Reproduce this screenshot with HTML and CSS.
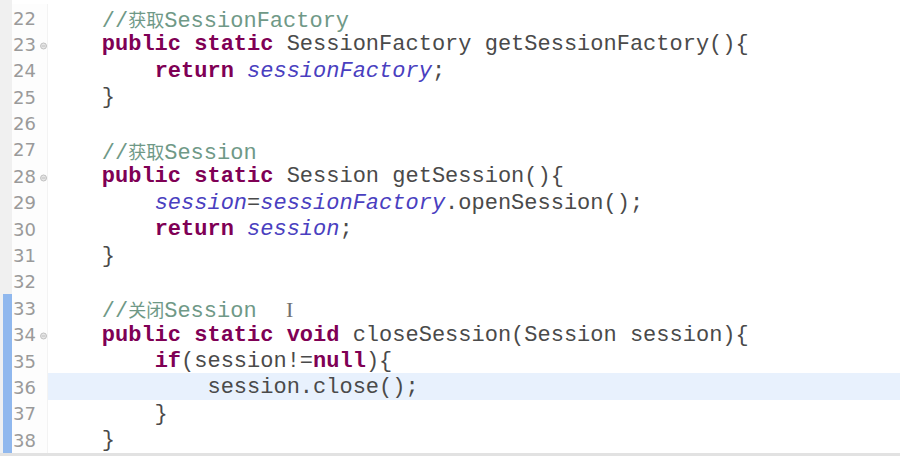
FILE: index.html
```html
<!DOCTYPE html>
<html>
<head>
<meta charset="utf-8">
<link rel="stylesheet" href="styles.css">
</head>
<body>
<div class="editor">
  <div class="row"><div class="ruler"></div><div class="num">22</div><div class="code">    <span class="cm">//<span class="cjk">获取</span>SessionFactory</span></div></div>
  <div class="row"><div class="ruler"></div><div class="num">23<svg class="fold" viewBox="0 0 8 8"><circle cx="4" cy="4" r="3.4"/><line x1="2" y1="4" x2="6" y2="4"/></svg></div><div class="code">    <span class="kw">public</span> <span class="kw">static</span> SessionFactory getSessionFactory(){</div></div>
  <div class="row"><div class="ruler"></div><div class="num">24</div><div class="code">        <span class="kw">return</span> <span class="fd">sessionFactory</span>;</div></div>
  <div class="row"><div class="ruler"></div><div class="num">25</div><div class="code">    }</div></div>
  <div class="row"><div class="ruler"></div><div class="num">26</div><div class="code"> </div></div>
  <div class="row"><div class="ruler"></div><div class="num">27</div><div class="code">    <span class="cm">//<span class="cjk">获取</span>Session</span></div></div>
  <div class="row"><div class="ruler"></div><div class="num">28<svg class="fold" viewBox="0 0 8 8"><circle cx="4" cy="4" r="3.4"/><line x1="2" y1="4" x2="6" y2="4"/></svg></div><div class="code">    <span class="kw">public</span> <span class="kw">static</span> Session getSession(){</div></div>
  <div class="row"><div class="ruler"></div><div class="num">29</div><div class="code">        <span class="fd">session</span>=<span class="fd">sessionFactory</span>.openSession();</div></div>
  <div class="row"><div class="ruler"></div><div class="num">30</div><div class="code">        <span class="kw">return</span> <span class="fd">session</span>;</div></div>
  <div class="row"><div class="ruler"></div><div class="num">31</div><div class="code">    }</div></div>
  <div class="row"><div class="ruler"></div><div class="num">32</div><div class="code"> </div></div>
  <div class="row"><div class="ruler mark"></div><div class="num">33</div><div class="code">    <span class="cm">//<span class="cjk">关闭</span>Session</span>  <span class="ibeam">I</span></div></div>
  <div class="row"><div class="ruler mark"></div><div class="num">34<svg class="fold" viewBox="0 0 8 8"><circle cx="4" cy="4" r="3.4"/><line x1="2" y1="4" x2="6" y2="4"/></svg></div><div class="code">    <span class="kw">public</span> <span class="kw">static</span> <span class="kw">void</span> closeSession(Session session){</div></div>
  <div class="row"><div class="ruler mark"></div><div class="num">35</div><div class="code">        <span class="kw">if</span>(session!=<span class="kw">null</span>){</div></div>
  <div class="row"><div class="ruler mark"></div><div class="num">36</div><div class="code current">            session.close();</div></div>
  <div class="row"><div class="ruler mark"></div><div class="num">37</div><div class="code">        }</div></div>
  <div class="row"><div class="ruler mark"></div><div class="num">38</div><div class="code">    }</div></div>
</div>
<div class="statusline"></div>
</body>
</html>
```
FILE: styles.css
```css
html, body {
  margin: 0;
  padding: 0;
  background: #ffffff;
  width: 900px;
  height: 456px;
  overflow: hidden;
}
body {
  display: flex;
  flex-direction: column;
}
.editor {
  display: flex;
  flex-direction: column;
  padding-top: 4px;
  flex: 1;
  background: linear-gradient(to right, #f0f0f0 0, #f0f0f0 12px, transparent 12px);
}
.row {
  display: flex;
  height: 26.4px;
  line-height: 26.4px;
}
.ruler {
  width: 12px;
  flex: none;
  background: #f0f0f0;
}
.ruler.mark {
  background: linear-gradient(to right, #eef0f2 0, #eef0f2 3px, #90b8ee 3px, #90b8ee 12px);
}
.num {
  width: 36px;
  flex: none;
  box-sizing: border-box;
  padding-left: 1px;
  padding-top: 3px;
  border-right: 1px solid #f3f3f3;
  font-family: "DejaVu Sans", sans-serif;
  font-size: 18px;
  color: #9a9a9a;
  display: flex;
  align-items: center;
  background: #fdfdfd;
}
.fold {
  width: 8px;
  height: 8px;
  margin-left: 4px;
  margin-top: 2px;
  fill: #e6e6e6;
  stroke: #b5b5b5;
  stroke-width: 0.9;
}
.code {
  flex: 1;
  box-sizing: border-box;
  height: 26.4px;
  padding-top: 2px;
  white-space: pre;
  font-family: "Liberation Mono", "Noto Sans CJK SC", monospace;
  font-size: 22px;
  color: #4a4a4a;
  padding-left: 1px;
}
.code.current {
  background: #e8f1fd;
}
.kw {
  color: #7f0055;
  font-weight: bold;
}
.fd {
  color: #4a3fc0;
  font-style: italic;
}
.cm {
  color: #6f9987;
}
.cjk {
  font-family: "Noto Sans CJK SC", sans-serif;
  font-size: 18px;
}
.ibeam {
  font-family: "Liberation Serif", serif;
  font-size: 22px;
  color: #707070;
  font-weight: normal;
  margin-left: 3px;
}
.statusline {
  height: 4px;
  background: #e2e2e2;
  flex: none;
}
```
